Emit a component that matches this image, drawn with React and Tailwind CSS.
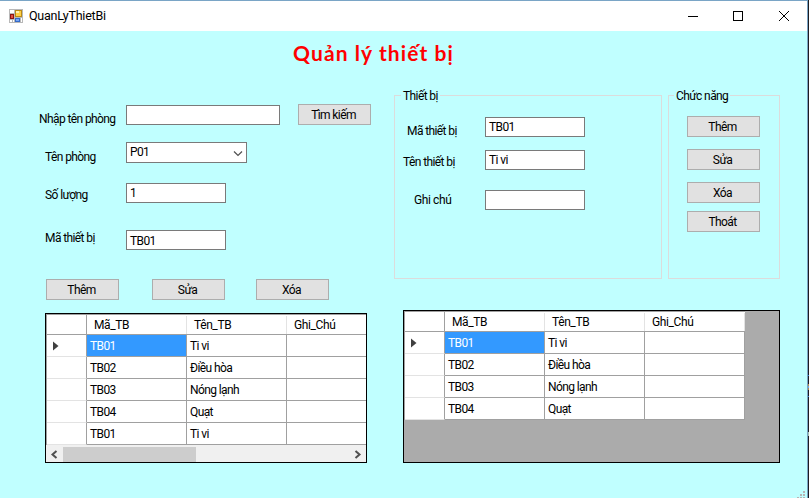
const devices = [
  ['TB01', 'Ti vi'],
  ['TB02', 'Điều hòa'],
  ['TB03', 'Nóng lạnh'],
  ['TB04', 'Quạt'],
];

function Button({ children, className = '' }) {
  return (
    <button
      className={`flex h-[21px] w-[73px] shrink-0 items-center justify-center border border-[#adadad] bg-[#e1e1e1] pr-[2px] leading-[14px] ${className}`}
    >
      {children}
    </button>
  );
}

function Field({ children, className = 'w-[100px]' }) {
  return (
    <div className={`flex h-5 shrink-0 border border-[#7a7a7a] bg-white pl-[3px] leading-[18px] ${className}`}>
      {children}
    </div>
  );
}

function Label({ children, className = '' }) {
  return <span className={`h-4 shrink-0 whitespace-nowrap leading-4 ${className}`}>{children}</span>;
}

function Grid({ rows, scrollable, className }) {
  return (
    <div className={`overflow-hidden border border-black bg-[#ababab] ${className}`}>
      <div className="flex w-[341px] flex-col border-l border-t border-[#a0a0a0] bg-white">
        <div className="flex h-5 border-b border-[#a0a0a0]">
          <div className="w-10 border-r border-[#a0a0a0]" />
          {['Mã_TB', 'Tên_TB', 'Ghi_Chú'].map((name) => (
            <div key={name} className="mt-px w-[100px] border-r border-[#e3e3e3] pl-[7px] leading-[18px] tracking-[-0.4px]">
              {name}
            </div>
          ))}
        </div>
        {rows.map(([id, name], i) => (
          <div key={i} className="flex h-[22px]">
            <div className="flex w-10 items-center border-b border-r border-b-[#e3e3e3] border-r-[#a0a0a0] pl-[6px]">
              {i === 0 && (
                <svg className="mt-px" width="6" height="10" viewBox="0 0 6 10">
                  <path d="M0 0.5 5.5 5 0 9.5Z" fill="#404040" />
                </svg>
              )}
            </div>
            <div
              className={`w-[100px] border-b border-r border-[#a0a0a0] pl-[3px] leading-[22px] ${i === 0 ? 'bg-[#3399ff] text-white' : ''}`}
            >
              {id}
            </div>
            <div className="w-[100px] border-b border-r border-[#a0a0a0] pl-[3px] leading-[22px]">{name}</div>
            <div className="w-[100px] border-b border-r border-[#a0a0a0]" />
          </div>
        ))}
      </div>
      {scrollable && (
        <div className="flex h-[17px] items-center bg-[#f0f0f0] pt-px">
          <svg width="17" height="15" viewBox="0 0 17 15" fill="none" stroke="#505050" strokeWidth="2">
            <path d="M10.5 4 6.500 7.500l4 3.500" />
          </svg>
          <div className="h-[15px] w-[133px] bg-[#cdcdcd]" />
          <svg className="ml-auto" width="17" height="15" viewBox="0 0 17 15" fill="none" stroke="#505050" strokeWidth="2">
            <path d="M6.500 4l4 3.500-4 3.500" />
          </svg>
        </div>
      )}
    </div>
  );
}

function TitleBar() {
  return (
    <header className="flex h-[30px] items-center bg-white pl-[9px]">
      <svg width="14" height="14" viewBox="0 0 14 14" shapeRendering="crispEdges">
        <path fill="#b8b8b8" d="M0 0h14v14H0z" />
        <path fill="#fff" d="M1 1h4v3H1zM1 11h2v2H1zM4 11h1v2H4zM12 9h1v4h-1z" />
        <path fill="#b98a17" d="M6 1h7v7H6z" />
        <path fill="#ffcf45" d="M7 2h5v5H7z" />
        <path fill="#fff0ae" d="M7 2h3v2H7z" />
        <path fill="#8c1414" d="M1 5h4v5H1z" />
        <path fill="#e0503f" d="M2 6h2v3H2z" />
        <path fill="#346ac8" d="M6 9h5v4H6z" />
        <path fill="#75a5f5" d="M7 10h3v2H7z" />
      </svg>
      <span className="ml-[6px] text-[12.5px] leading-[18px] tracking-[-0.25px]">QuanLyThietBi</span>
      <svg className="ml-auto mr-[16px]" width="104" height="12" viewBox="0 0 104 12" fill="none" stroke="#000">
        <path d="M1 6.5h10" shapeRendering="crispEdges" />
        <path d="M46.500 1.500h9v9h-9z" shapeRendering="crispEdges" />
        <path d="M92 1l10 10M102 1 92 11" />
      </svg>
    </header>
  );
}

export default function App() {
  return (
    <div
      className="relative flex h-[498px] w-[809px] overflow-hidden bg-[#c0ffff] text-[12px] tracking-[-0.6px] text-black"
      style={{ fontFamily: 'Roboto, "Noto Sans", sans-serif' }}
    >
      <div className="flex w-[808px] flex-col border-r border-t border-[#7aa5c6]">
        <TitleBar />
        <h1 className="ml-[293px] mt-[7px] h-[30px] whitespace-nowrap font-['Lato'] text-[21px] font-bold leading-[29px] tracking-[1.1px] text-[#ff0000]">
          Quản lý thiết bị
        </h1>
        <div className="mt-[21px] flex">
          <section className="w-[394px] pt-[15px]">
            <div className="flex h-[21px] items-start pl-[39px]">
              <Label className="mt-[7px] w-[87px]">Nhập tên phòng</Label>
              <Field className="mt-px w-[154px]" />
              <Button className="ml-[18px]">Tìm kiếm</Button>
            </div>
            <div className="mt-[17px] flex h-[21px] items-start pl-[45px]">
              <Label className="mt-[7px] w-[81px]">Tên phòng</Label>
              <div className="flex h-[21px] w-[121px] justify-between border border-[#7a7a7a] bg-white pl-[3px] leading-[18px]">
                P01
                <svg className="mr-[3px] mt-[7px]" width="10" height="7" viewBox="0 0 10 7" fill="none" stroke="#505050" strokeWidth="1.2">
                  <path d="M1 1.500 5 5.500l4-4" />
                </svg>
              </div>
            </div>
            <div className="mt-5 flex h-5 items-start pl-[45px]">
              <Label className="mt-[4px] w-[81px]">Số lượng</Label>
              <Field>1</Field>
            </div>
            <div className="mt-[27px] flex h-5 items-start pl-[45px]">
              <Label className="w-[81px]">Mã thiết bị</Label>
              <Field className="w-[100px] pt-px">TB01</Field>
            </div>
            <div className="mt-[29px] flex pl-[46px]">
              <Button>Thêm</Button>
              <Button className="ml-[33px]">Sửa</Button>
              <Button className="ml-[31px]">Xóa</Button>
            </div>
            <Grid rows={[...devices, ['TB01', 'Ti vi']]} scrollable className="ml-[45px] mt-[13px] h-[150px] w-[322px]" />
          </section>
          <section className="w-[386px]">
            <div className="flex gap-[6px]">
              <fieldset className="h-[190px] w-[268px] border border-[#dcdcdc]">
                <legend className="ml-[6px] h-[13px] px-[2px] leading-[15px]">Thiết bị</legend>
                <div className="mt-[15px] flex h-5 items-start pl-[12px]">
                  <Label className="mt-[6px] w-[78px]">Mã thiết bị</Label>
                  <Field>TB01</Field>
                </div>
                <div className="mt-[13px] flex h-5 items-start pl-[8px]">
                  <Label className="mt-[4px] w-[82px]">Tên thiết bị</Label>
                  <Field>Ti vi</Field>
                </div>
                <div className="mt-5 flex h-5 items-start pl-[19px]">
                  <Label className="mt-[2px] w-[71px] tracking-[-0.4px]">Ghi chú</Label>
                  <Field />
                </div>
              </fieldset>
              <fieldset className="h-[190px] w-[112px] border border-[#dcdcdc]">
                <legend className="ml-[5px] h-[13px] px-[2px] leading-[15px]">Chức năng</legend>
                <div className="flex flex-col pl-[18px] pt-[14px]">
                  <Button>Thêm</Button>
                  <Button className="mt-3">Sửa</Button>
                  <Button className="mt-3">Xóa</Button>
                  <Button className="mt-2">Thoát</Button>
                </div>
              </fieldset>
            </div>
            <Grid rows={devices} className="ml-[9px] mt-[31px] h-[153px] w-[377px]" />
          </section>
        </div>
      </div>
      <div className="flex w-px flex-col bg-[#1c1c22]">
        <div className="mt-[375px] h-px bg-[#2f7cc4]" />
        <div className="mt-[8px] h-[2px] bg-[#b08a4a]" />
        <div className="h-[2px] bg-[#6ea3d8]" />
        <div className="h-[2px] bg-[#b08a4a]" />
        <div className="mt-[6px] h-px bg-[#2f7cc4]" />
        <div className="mt-[35px] h-[4px] bg-[#9fc0b0]" />
      </div>
      <svg className="absolute bottom-0 right-[4px]" width="8" height="7" viewBox="0 0 8 7" fill="#b5b5b5" shapeRendering="crispEdges">
        <path d="M6 0h2v2H6zM3 3h2v2H3zM6 3h2v2H6zM0 6h2v1H0zM3 6h2v1H3zM6 6h2v1H6z" />
      </svg>
    </div>
  );
}
